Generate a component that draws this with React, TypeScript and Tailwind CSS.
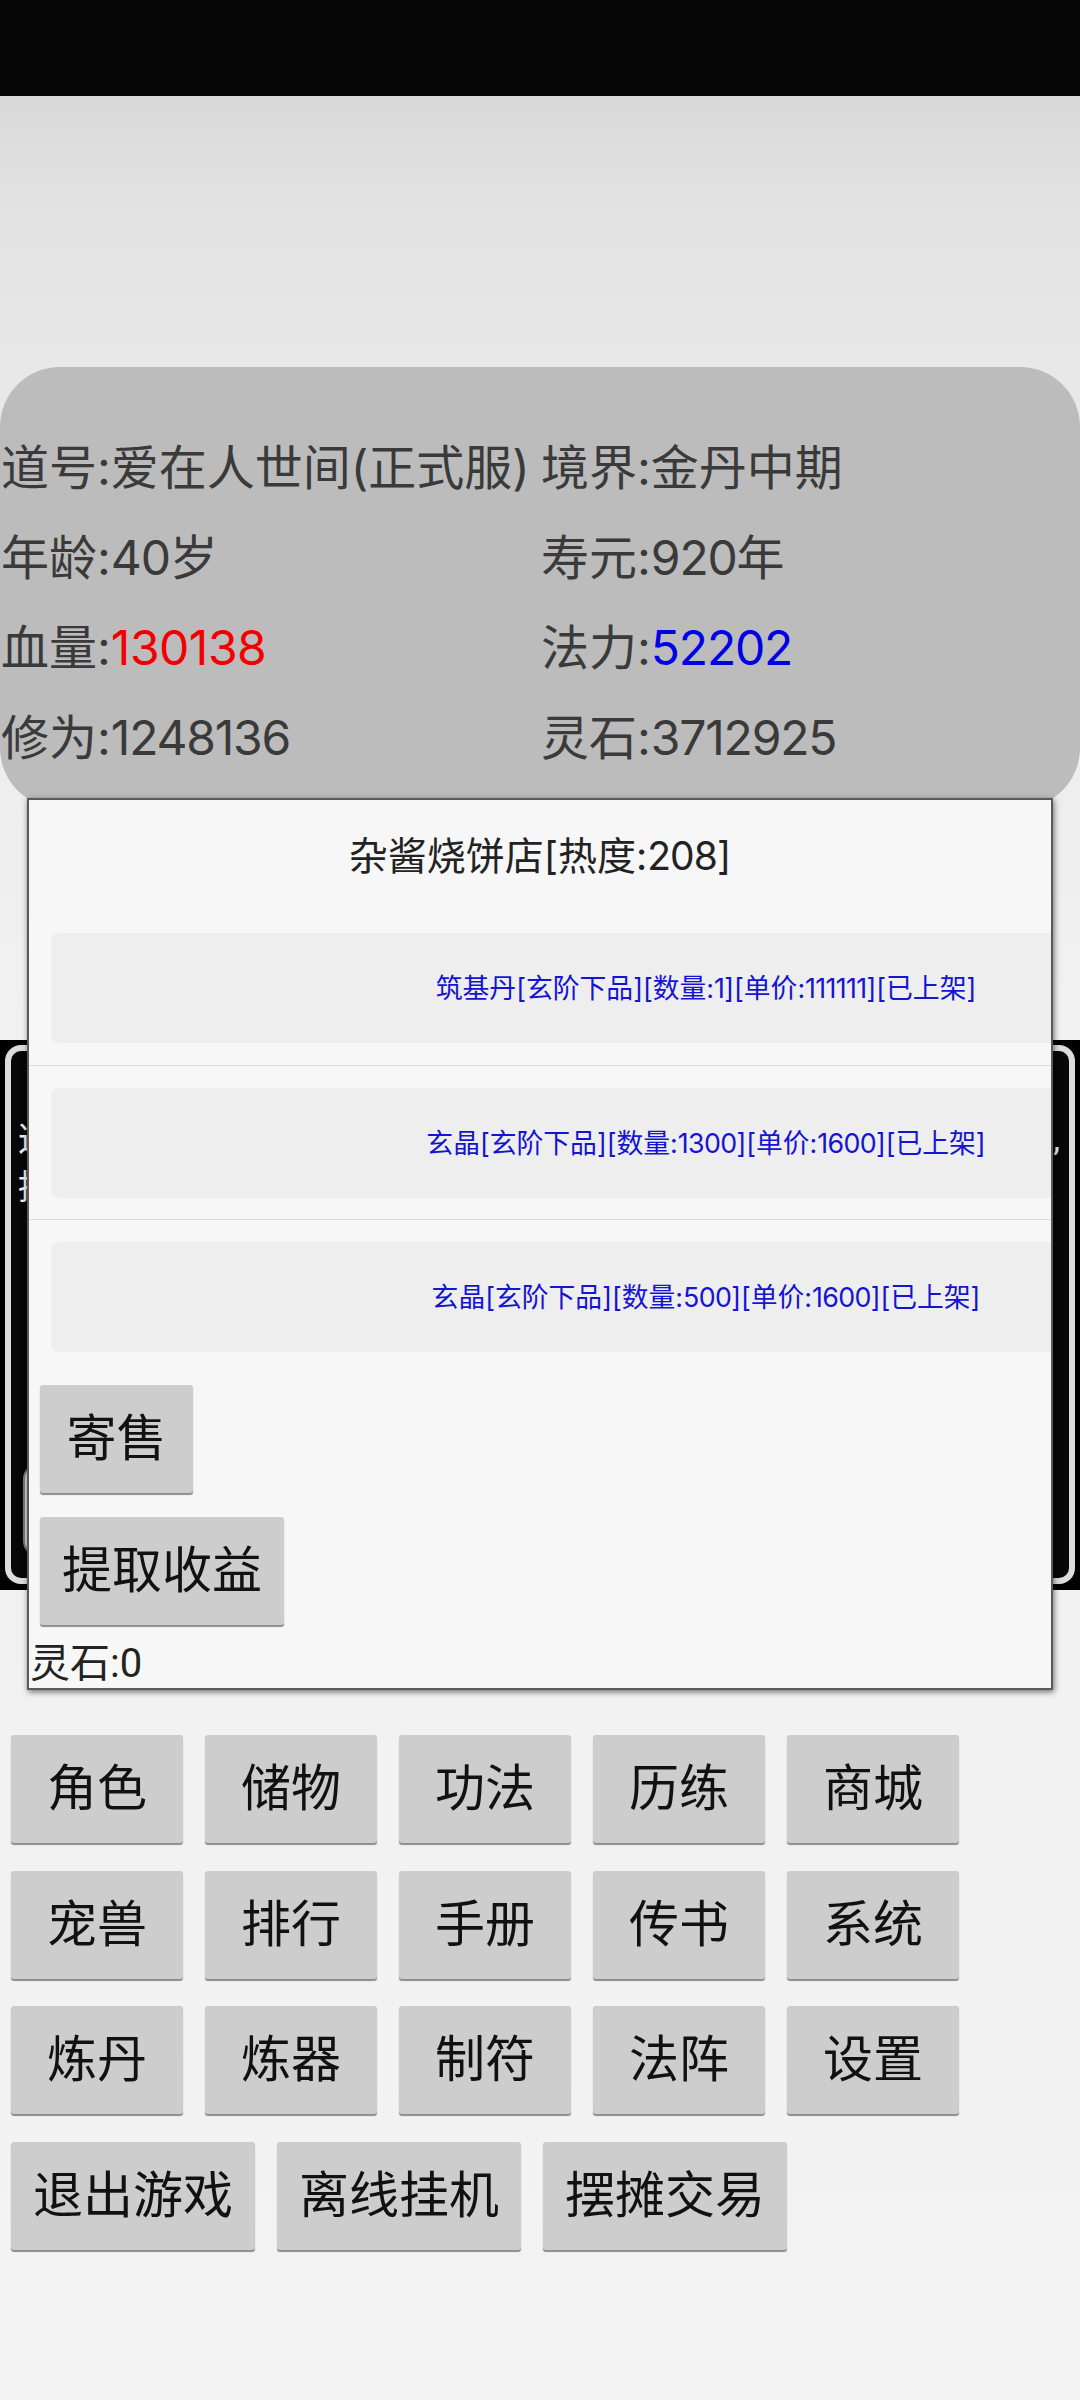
const FONT = "font-['Roboto','Noto_Sans_CJK_SC',sans-serif]";
const ROUND = "font-['Inter','Noto_Sans_CJK_SC',sans-serif]";

/* Latin runs in the rounded face are set slightly tighter than the CJK around them */
function Mixed({ text }: { text: string }) {
  return (
    <>
      {text.split(/([0-9]+)/).map((part, i) =>
        i % 2 === 1 ? (
          <span key={i} className="tracking-[-0.025em]">
            {part}
          </span>
        ) : (
          part
        ),
      )}
    </>
  );
}

const navRows = [
  ["角色", "储物", "功法", "历练", "商城"],
  ["宠兽", "排行", "手册", "传书", "系统"],
  ["炼丹", "炼器", "制符", "法阵", "设置"],
];

const stats: [React.ReactNode, React.ReactNode][] = [
  [<Mixed text="道号:爱在人世间(正式服)" />, <Mixed text="境界:金丹中期" />],
  [<Mixed text="年龄:40岁" />, <Mixed text="寿元:920年" />],
  [
    <>血量:<span className="text-[#f00000] tracking-[-0.01em]">130138</span></>,
    <>法力:<span className="text-[#0000e6] tracking-[-0.025em]">52202</span></>,
  ],
  [<Mixed text="修为:1248136" />, <Mixed text="灵石:3712925" />],
];

const goods = [
  "筑基丹[玄阶下品][数量:1][单价:111111][已上架]",
  "玄晶[玄阶下品][数量:1300][单价:1600][已上架]",
  "玄晶[玄阶下品][数量:500][单价:1600][已上架]",
];

function GameButton({ label, width }: { label: string; width: string }) {
  return (
    <button
      className={`${width} h-[108px] shrink-0 rounded-[3px] bg-[#cdcdcd] text-[50px] leading-none text-[#111111] shadow-[0_2px_1px_#8c8c8c] flex items-center justify-center`}
    >
      {label}
    </button>
  );
}

export default function App() {
  return (
    <div
      className={`${FONT} relative w-[1080px] h-[2400px] overflow-hidden bg-[linear-gradient(180deg,#d9d9d9_96px,#e2e2e2_200px,#e8e8e8_360px,#f1f1f1_1000px,#f3f3f3_100%)]`}
    >
      <div className="h-24 bg-[#060606]" />

      <section className={`${ROUND} mt-[271px] h-[441px] rounded-[60px] bg-[#bcbcbc] pt-[56px] pl-[1px] text-[#3a3a3a] text-[48px]`}>
        {stats.map(([a, b], i) => (
          <div key={i} className="flex h-[90px] items-center whitespace-nowrap">
            <div className="w-[540px]">{a}</div>
            <div>{b}</div>
          </div>
        ))}
      </section>

      <section className="mt-[232px] h-[550px] bg-black p-[5px]">
        <div className="h-[539px] rounded-[16px] border-[6px] border-[#dcdcdc] bg-[#070707] px-[7px] pt-[64px] text-[34px] leading-[48px] text-[#eeeeee]">
          <div className="flex justify-between pr-[2px]">
            <span>这</span>
            <span>,</span>
          </div>
          <div>持</div>
          <div className="ml-[5px] mt-[252px] h-[94px] w-[200px] rounded-[16px] border-2 border-[#777777] bg-[#d5d5d5]" />
        </div>
      </section>

      <nav className="mt-[145px] ml-[11px] flex flex-col gap-[27.5px]">
        {navRows.map((row, i) => (
          <div key={i} className="flex gap-[22px]">
            {row.map((l) => (
              <GameButton key={l} label={l} width="w-[172px]" />
            ))}
          </div>
        ))}
        <div className="flex gap-[22px]">
          {["退出游戏", "离线挂机", "摆摊交易"].map((l) => (
            <GameButton key={l} label={l} width="w-[244px]" />
          ))}
        </div>
      </nav>

      <div className="absolute left-[27px] top-[798px] h-[892px] w-[1026px] border-2 border-[#5a5a5a] bg-[#f7f7f7] shadow-[1px_2px_6px_rgba(0,0,0,0.55)]">
        <div className={`${ROUND} flex h-[111px] items-center justify-center pt-[2px] text-[39px] text-[#222222]`}>
          <Mixed text="杂酱烧饼店[热度:208]" />
        </div>
        <div className="overflow-hidden">
          {goods.map((g, i) => (
            <div key={g} className={`pt-[22px] pb-[21.5px] pl-[22px] ${i < 2 ? "border-b border-[#dcdcdc]" : ""}`}>
              <div className={`${ROUND} flex h-[110px] w-[1310px] items-center justify-center rounded-[8px] bg-[#eeeeee] pt-[1px] text-[26.8px] text-[#1414d2] whitespace-nowrap`}>
                <span>
                  <Mixed text={g} />
                </span>
              </div>
            </div>
          ))}
        </div>
        <div className="mt-[11px] flex flex-col items-start gap-[24px] pl-[11px]">
          <GameButton label="寄售" width="w-[153px]" />
          <GameButton label="提取收益" width="w-[244px]" />
        </div>
        <div className="mt-[14px] pl-[1px] text-[40px] leading-[50px] text-[#222222]">灵石:0</div>
      </div>
    </div>
  );
}
